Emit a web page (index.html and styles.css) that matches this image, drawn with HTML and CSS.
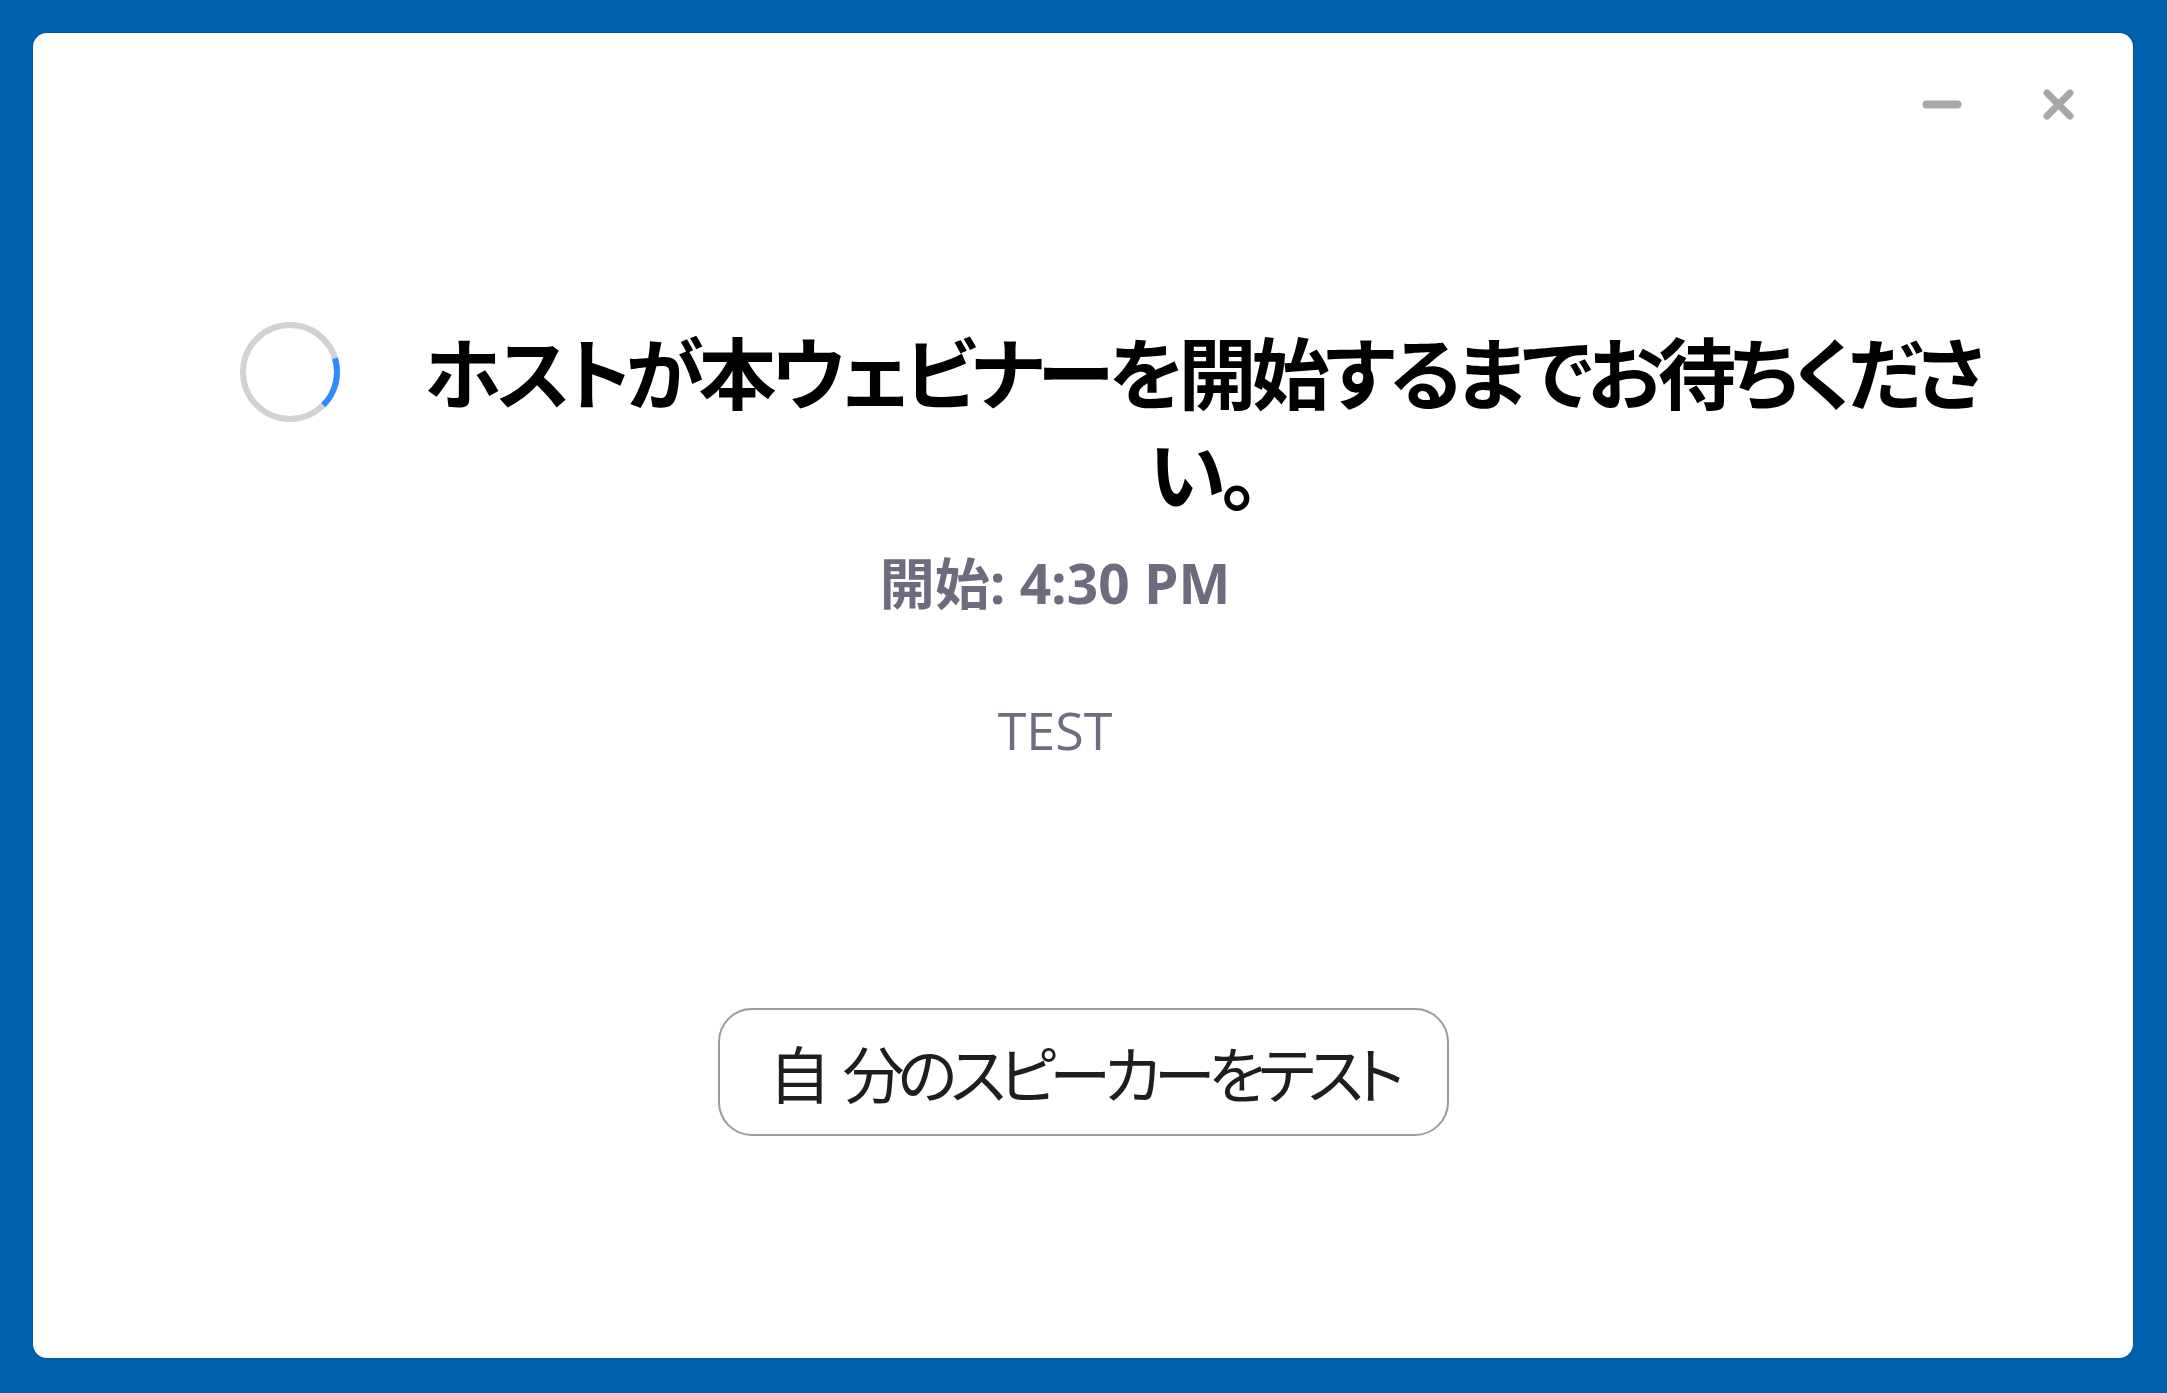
FILE: index.html
```html
<!DOCTYPE html>
<html lang="ja">
<head>
<meta charset="utf-8">
<title>Waiting for host</title>
<link rel="stylesheet" href="styles.css">
</head>
<body>
<div class="window">
  <div class="titlebar">
    <span class="ctl ctl-min" aria-label="最小化">
      <svg width="40" height="9" viewBox="0 0 40 9"><line x1="4.5" y1="4.5" x2="35.5" y2="4.5" stroke="#a8a8a8" stroke-width="8" stroke-linecap="round"/></svg>
    </span>
    <span class="ctl ctl-close" aria-label="閉じる">
      <svg width="31" height="31" viewBox="0 0 31 31"><path d="M4 4 L27 27 M27 4 L4 27" stroke="#a8a8a8" stroke-width="7" stroke-linecap="round"/></svg>
    </span>
  </div>
  <div class="headline">
    <svg class="spinner" width="100" height="100" viewBox="0 0 100 100">
      <circle cx="50" cy="50" r="47" fill="none" stroke="#d2d2d2" stroke-width="6"/>
      <path d="M94.95 36.26 A47 47 0 0 1 83.23 83.23" fill="none" stroke="#2d8cff" stroke-width="6"/>
    </svg>
    <h1 class="title">ホストが本ウェビナーを開始するまでお待ちくださ<br>い。</h1>
  </div>
  <div class="info">
    <p class="start">開始: 4:30 PM</p>
    <p class="topic">TEST</p>
  </div>
  <div class="actions">
    <button class="speaker" type="button">自 分のスピーカーをテスト</button>
  </div>
</div>
</body>
</html>
```

FILE: styles.css
```css
html, body {
  margin: 0;
  height: 100%;
}
body {
  background: #0061ae;
  padding: 33px 34px 35px 33px;
  box-sizing: border-box;
  font-family: "Open Sans", "Noto Sans CJK JP", sans-serif;
}
.window {
  background: #ffffff;
  border-radius: 14px;
  height: 100%;
  display: flex;
  flex-direction: column;
  box-shadow: 0 0 2px rgba(0, 40, 90, 0.6);
}
.titlebar {
  display: flex;
  justify-content: flex-end;
  align-items: center;
  padding: 56px 59px 0 0;
  height: 31px;
  gap: 81px;
}
.ctl {
  display: flex;
  align-items: center;
}
.headline {
  display: flex;
  align-items: flex-start;
  margin-top: 202px;
  padding: 0 69px 0 207px;
}
.spinner {
  flex: none;
  display: block;
}
.title {
  flex: 1;
  margin: -2px 0 0 0;
  text-align: center;
  font-family: "Noto Sans CJK JP", sans-serif;
  font-feature-settings: "palt";
  font-weight: 700;
  font-size: 78px;
  line-height: 101px;
  color: #000;
  letter-spacing: -5px;
}
.info {
  margin-top: 29px;
  padding-right: 56px;
  text-align: center;
}
.start {
  margin: 0;
  font-family: "Open Sans", "Noto Sans CJK JP", sans-serif;
  font-weight: 700;
  font-size: 55px;
  line-height: 64px;
  color: #6c6c7e;
}
.topic {
  margin: 83px 0 0 0;
  font-family: "Open Sans", sans-serif;
  font-weight: 400;
  font-size: 52px;
  line-height: 64px;
  color: #6c6e80;
}
.actions {
  margin-top: 246px;
  display: flex;
  justify-content: center;
}
.speaker {
  width: 731px;
  height: 128px;
  border: 2px solid #9a9a9a;
  border-radius: 34px;
  background: #fff;
  font-family: "Noto Sans CJK JP", sans-serif;
  font-feature-settings: "palt";
  font-weight: 400;
  font-size: 62px;
  letter-spacing: -7px;
  word-spacing: 12px;
  color: #1e1e1e;
  padding: 0;
}
```
